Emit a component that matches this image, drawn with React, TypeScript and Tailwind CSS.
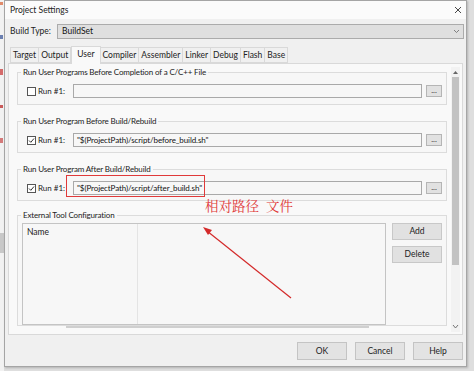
import React from "react";

const font = { fontFamily: 'Lato, "Noto Sans", sans-serif' };

function Check({ checked }: { checked: boolean }) {
  return (
    <div className="w-[9px] h-[9px] border border-[#555] bg-white flex items-center justify-center">
      {checked && (
        <svg width="7" height="7" viewBox="0 0 7 7">
          <path d="M1 3.5 L2.8 5.3 L6 1.5" stroke="#333" strokeWidth="1" fill="none" />
        </svg>
      )}
    </div>
  );
}

function Group({ title, children, className = "" }: { title: string; children?: React.ReactNode; className?: string }) {
  return (
    <fieldset className={`border border-[#dcdcdc] bg-[#f7f7f7] ${className}`}>
      <legend className="ml-[3px] px-[2px] text-[8px] leading-[10px] tracking-[-0.15px] text-[#222]">{title}</legend>
      {children}
    </fieldset>
  );
}

function RunRow({ checked, value }: { checked: boolean; value: string }) {
  return (
    <div className="flex items-center h-[14px] mt-[7px] ml-[9px]">
      <Check checked={checked} />
      <span className="ml-[2px] text-[8px] text-[#222] w-[35px] whitespace-nowrap">Run #1:</span>
      <div className="w-[349px] h-[14px] border border-[#a9a9a9] bg-[#f7f7f7] flex items-center pl-[3px] text-[8px] text-[#111] whitespace-nowrap tracking-[-0.1px]">
        {value}
      </div>
      <div className="ml-[4px] w-[16px] h-[12px] border border-[#b5b5b5] bg-[#e1e1e1] flex items-center justify-center text-[8px] leading-none pb-[3px] text-[#333]">
        ...
      </div>
    </div>
  );
}

export default function App() {
  const tabs = ["Target", "Output", "User", "Compiler", "Assembler", "Linker", "Debug", "Flash", "Base"];
  return (
    <div className="w-[474px] h-[371px] bg-[#dedede] flex overflow-hidden relative" style={font}>
      {/* left background strip */}
      <div className="w-[4px] h-full bg-[#f2f2f2] flex flex-col gap-[30px] pt-[2px]">
        <div className="h-[3px] w-[3px] bg-[#e08a6a]" />
        <div className="h-[4px] w-[3px] bg-[#6b7fb0]" />
        <div className="h-[6px] w-[3px] bg-[#d46a6a]" />
        <div className="h-[3px] w-[3px] bg-[#c95a5a]" />
        <div className="h-[5px] w-[3px] bg-[#d47a7a]" />
        <div className="h-[20px] w-[4px] bg-[#c8c8c8] mt-[60px]" />
      </div>
      {/* window */}
      <div className="w-[463px] h-[367px] border border-[#a5a5a5] bg-[#f0f0f0] flex flex-col shadow-[1px_1px_2px_rgba(0,0,0,0.2)]">
        {/* title bar */}
        <div className="h-[18px] bg-[#fbfbfb] flex items-center justify-between pl-[5px] pr-[4px]">
          <span className="text-[8.5px] text-[#222]">Project Settings</span>
          <svg width="8" height="8" viewBox="0 0 8 8">
            <path d="M1 1 L7 7 M7 1 L1 7" stroke="#333" strokeWidth="0.9" />
          </svg>
        </div>
        {/* build type */}
        <div className="flex items-center mt-[5px] pl-[5px] h-[15px]">
          <span className="text-[8.5px] text-[#222] w-[47px] whitespace-nowrap">Build Type:</span>
          <div className="flex-1 mr-[2px] h-[15px] border border-[#ababab] bg-[#dfdfdf] flex items-center justify-between pl-[4px] pr-[3px]">
            <span className="text-[8.5px] text-[#111]">BuildSet</span>
            <svg width="7" height="5" viewBox="0 0 7 5">
              <path d="M1 1 L3.5 3.5 L6 1" stroke="#666" strokeWidth="0.8" fill="none" />
            </svg>
          </div>
        </div>
        {/* tabs */}
        <div className="flex items-end mt-[6px] pl-[6px] h-[18px] relative z-10">
          {tabs.map((t) =>
            t === "User" ? (
              <div key={t} className="h-[18px] px-[5px] bg-[#f9f9f9] border border-b-0 border-[#d9d9d9] text-[8.5px] text-[#222] flex items-start pt-[1px] -mb-[1px]">
                {t}
              </div>
            ) : (
              <div key={t} className="h-[16px] px-[2px] bg-[#f0f0f0] border border-[#d9d9d9] -ml-[1px] text-[8.5px] text-[#222] flex items-center">
                {t}
              </div>
            )
          )}
        </div>
        {/* panel */}
        <div className="mx-[3px] h-[272px] border border-[#d9d9d9] bg-[#f9f9f9] flex pl-[5px] pt-[3px] pr-[2px]">
          <div className="flex-1 flex flex-col">
            <div className="flex flex-col pl-[3px] pr-[4px] gap-[3px]">
              <Group title="Run User Programs Before Completion of a C/C++ File" className="h-[38px]">
                <RunRow checked={false} value="" />
              </Group>
              <Group title="Run User Program Before Build/Rebuild" className="h-[37px] mt-[8px]">
                <RunRow checked={true} value={'"$(ProjectPath)/script/before_build.sh"'} />
              </Group>
              <Group title="Run User Program After Build/Rebuild" className="h-[37px] mt-[8px]">
                <RunRow checked={true} value={'"$(ProjectPath)/script/after_build.sh"'} />
              </Group>
              <Group title="External Tool Configuration" className="h-[116px] mt-[6px]">
                <div className="flex mt-[3px] ml-[4px]">
                  <div className="w-[364px] h-[102px] border border-[#c4c4c4] bg-[#f7f7f7] flex">
                    <div className="w-[115px] border-r border-[#e4e4e4] pl-[4px] pt-[2px] text-[8.5px] text-[#222]">Name</div>
                  </div>
                  <div className="ml-[6px] flex flex-col gap-[6px]">
                    <div className="w-[50px] h-[17px] border border-[#c8c8c8] bg-[#e1e1e1] flex items-center justify-center text-[8.5px] text-[#222]">Add</div>
                    <div className="w-[50px] h-[17px] border border-[#c8c8c8] bg-[#e1e1e1] flex items-center justify-center text-[8.5px] text-[#222]">Delete</div>
                  </div>
                </div>
              </Group>
            </div>
            <div className="mt-[0px] ml-[52px] w-[303px] h-[2px] border-t border-b border-[#cfcfcf] bg-[#f4f4f4]" />
          </div>
          {/* vertical scrollbar */}
          <div className="w-[9px] h-[265px] flex flex-col items-center bg-[#f2f2f2]">
            <svg width="7" height="7" viewBox="0 0 7 7" className="mt-[2px]">
              <path d="M1 5 L3.5 2 L6 5 Z" fill="#666" />
            </svg>
            <div className="w-[7px] h-[188px] bg-[#c2c2c2] mt-[1px]" />
            <div className="flex-1" />
            <svg width="7" height="7" viewBox="0 0 7 7" className="mb-[2px]">
              <path d="M1 2 L3.5 5 L6 2" stroke="#666" strokeWidth="0.9" fill="none" />
            </svg>
          </div>
        </div>
        {/* footer */}
        <div className="flex-1 flex justify-end items-start pt-[7px] pr-[3px] gap-[8px]">
          {["OK", "Cancel", "Help"].map((b) => (
            <div key={b} className="w-[50px] h-[18px] border border-[#c4c4c4] bg-[#e3e3e3] flex items-center justify-center text-[8.5px] text-[#222]">
              {b}
            </div>
          ))}
        </div>
      </div>

      {/* annotations */}
      <div className="absolute left-[66px] top-[175px] w-[139px] h-[22px] border-[1.5px] border-[#e03a3a] pointer-events-none" />
      <div
        className="absolute left-[205px] top-[195px] text-[13.5px] text-[#e03a3a]"
        style={{ fontFamily: '"Noto Serif CJK SC", "Noto Sans CJK SC", serif' }}
      >
        相对路径&nbsp;&nbsp;文件
      </div>
      <svg className="absolute left-0 top-0 pointer-events-none" width="474" height="371">
        <line x1="291" y1="298" x2="207" y2="231" stroke="#d42a2a" strokeWidth="1.2" />
        <path d="M203 227 L212 230 L208 235 Z" fill="#d42a2a" />
      </svg>
    </div>
  );
}
